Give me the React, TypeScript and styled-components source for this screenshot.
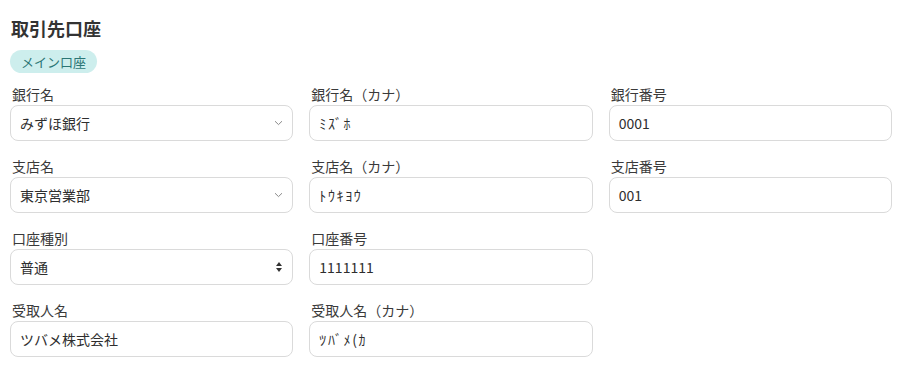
import styled, { createGlobalStyle } from 'styled-components';

const GlobalStyle = createGlobalStyle`
  html, body {
    margin: 0;
    padding: 0;
    background: #fff;
  }
  body {
    font-family: "Noto Sans CJK JP", "Noto Sans", sans-serif;
    color: #333;
  }
`;

const Page = styled.div`
  padding: 15px 32px 0 10px;
  width: 882px;
`;

const Title = styled.h2`
  margin: 0 0 0 1px;
  font-size: 18px;
  line-height: 26px;
  font-weight: 700;
  color: #333;
`;

const Badge = styled.span`
  display: inline-flex;
  align-items: center;
  margin-top: 9px;
  height: 23px;
  padding: 0 11px;
  border-radius: 12px;
  background: #cdeeed;
  color: #2b7675;
  font-size: 13px;
`;

const Grid = styled.div`
  display: grid;
  grid-template-columns: repeat(3, 1fr);
  column-gap: 16px;
  row-gap: 15px;
  margin-top: 11px;
`;

const Field = styled.div`
  display: flex;
  flex-direction: column;
  gap: 1px;
`;

const Label = styled.label`
  font-size: 14px;
  line-height: 20px;
  color: #3a3a3a;
  padding-left: 2px;
`;

const Control = styled.div`
  position: relative;
  height: 36px;
  box-sizing: border-box;
  border: 1px solid #dadada;
  border-radius: 8px;
  background: #fff;
  display: flex;
  align-items: center;
  padding: 0 10px 0 9px;
  font-size: 14px;
  color: #2e2e2e;
`;

const Value = styled.span<{ $kana?: boolean }>`
  flex: 1;
  letter-spacing: ${(p) => (p.$kana ? '1.6px' : '0')};
`;

const Arrow = styled.span`
  display: flex;
  align-items: center;
  margin-right: -1px;
`;

const Empty = styled.div``;

const Chevron = () => (
  <svg width="9" height="6" viewBox="0 0 9 6">
    <path d="M1 1.2 L4.5 4.6 L8 1.2" fill="none" stroke="#8a8a8a" strokeWidth="1" />
  </svg>
);

const UpDown = () => (
  <svg width="8" height="12" viewBox="0 0 8 12">
    <path d="M4 1 L7 5 L1 5 Z" fill="#333" />
    <path d="M4 11 L7 7 L1 7 Z" fill="#333" />
  </svg>
);

type FieldDef = {
  label: string;
  value: string;
  kind?: 'select' | 'native';
  kana?: boolean;
} | null;

const fields: FieldDef[] = [
  { label: '銀行名', value: 'みずほ銀行', kind: 'select' },
  { label: '銀行名（カナ）', value: 'ﾐｽﾞﾎ', kana: true },
  { label: '銀行番号', value: '0001' },
  { label: '支店名', value: '東京営業部', kind: 'select' },
  { label: '支店名（カナ）', value: 'ﾄｳｷﾖｳ', kana: true },
  { label: '支店番号', value: '001' },
  { label: '口座種別', value: '普通', kind: 'native' },
  { label: '口座番号', value: '1111111' },
  null,
  { label: '受取人名', value: 'ツバメ株式会社' },
  { label: '受取人名（カナ）', value: 'ﾂﾊﾞﾒ(ｶ', kana: true },
  null,
];

export default function App() {
  return (
    <>
      <GlobalStyle />
      <Page>
        <Title>取引先口座</Title>
        <Badge>メイン口座</Badge>
        <Grid>
          {fields.map((f, i) =>
            f ? (
              <Field key={i}>
                <Label>{f.label}</Label>
                <Control>
                  <Value $kana={f.kana}>{f.value}</Value>
                  {f.kind === 'select' && (
                    <Arrow>
                      <Chevron />
                    </Arrow>
                  )}
                  {f.kind === 'native' && (
                    <Arrow>
                      <UpDown />
                    </Arrow>
                  )}
                </Control>
              </Field>
            ) : (
              <Empty key={i} />
            )
          )}
        </Grid>
      </Page>
    </>
  );
}
